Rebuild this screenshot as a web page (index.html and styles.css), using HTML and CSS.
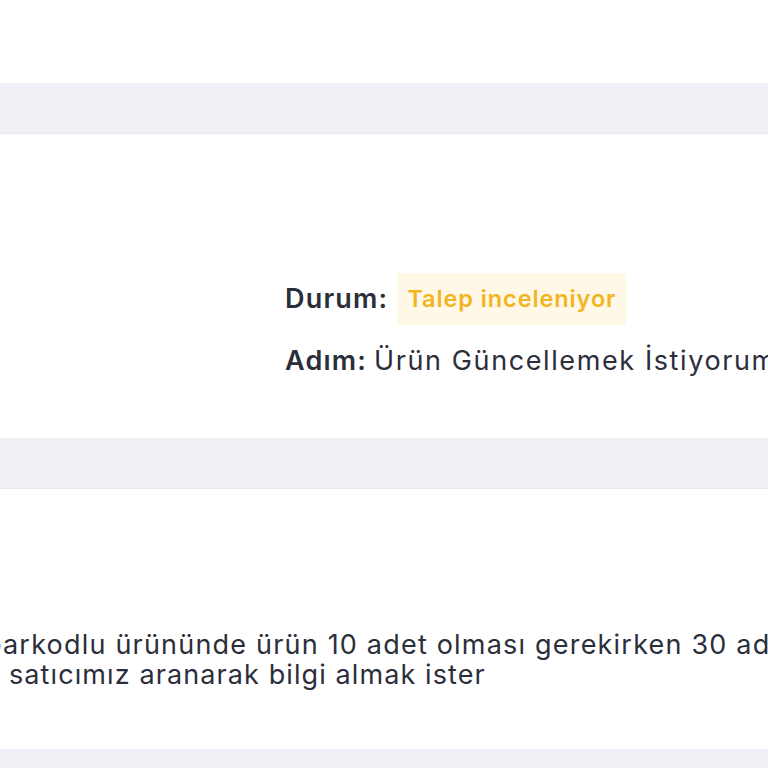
FILE: index.html
```html
<!DOCTYPE html>
<html lang="tr">
<head>
<meta charset="utf-8">
<link rel="stylesheet" href="styles.css">
</head>
<body>
<div class="page">
  <div class="spacer-top"></div>
  <div class="band"></div>
  <section class="info">
    <div class="row">
      <span class="label">Durum:</span>
      <span class="badge">Talep inceleniyor</span>
    </div>
    <div class="row row-step">
      <span class="label">Adım:</span>
      <span class="value">Ürün Güncellemek İstiyorum</span>
    </div>
  </section>
  <div class="band"></div>
  <section class="desc">
    <p class="desc-text"><span class="line line-1">barkodlu ürününde ürün 10 adet olması gerekirken 30 adet gönderilmiştir.</span><span class="line line-2">satıcımız aranarak bilgi almak ister</span></p>
  </section>
  <div class="band band-last"></div>
</div>
</body>
</html>
```

FILE: styles.css
```css
html, body {
  margin: 0;
  padding: 0;
  background: #ffffff;
}
body {
  width: 768px;
  height: 768px;
  overflow: hidden;
  font-family: Inter, "Noto Sans", sans-serif;
  color: #2b2f3b;
}
.page {
  display: flex;
  flex-direction: column;
}
.spacer-top {
  height: 83px;
}
.band {
  height: 51px;
  background: #f0f1f6;
  border-bottom: 1px solid #e9e9ec;
  box-sizing: border-box;
}
.band-last {
  height: 30px;
  border-bottom: none;
}
.info {
  height: 304px;
  display: flex;
  flex-direction: column;
  padding: 139px 0 0 285px;
  box-sizing: border-box;
}
.row {
  display: flex;
  align-items: center;
  font-size: 27px;
  line-height: 32px;
  letter-spacing: 1.2px;
  white-space: nowrap;
}
.row-step {
  margin-top: 20px;
}
.label {
  font-weight: 600;
}
.badge {
  margin-left: 9px;
  background: #fff8e6;
  color: #f2b522;
  font-weight: 600;
  font-size: 23.5px;
  letter-spacing: 0.9px;
  padding: 13px 10px;
  line-height: 26px;
}
.value {
  margin-left: 7px;
  letter-spacing: 1.6px;
}
.desc {
  height: 260px;
  box-sizing: border-box;
  padding-top: 141px;
}
.desc-text {
  margin: 0;
  font-size: 27px;
  line-height: 30px;
  letter-spacing: 1.1px;
  white-space: nowrap;
}
.line {
  display: block;
}
.line-1 {
  margin-left: -15px;
  letter-spacing: 1.2px;
}
.line-2 {
  margin-left: 9px;
}
```
